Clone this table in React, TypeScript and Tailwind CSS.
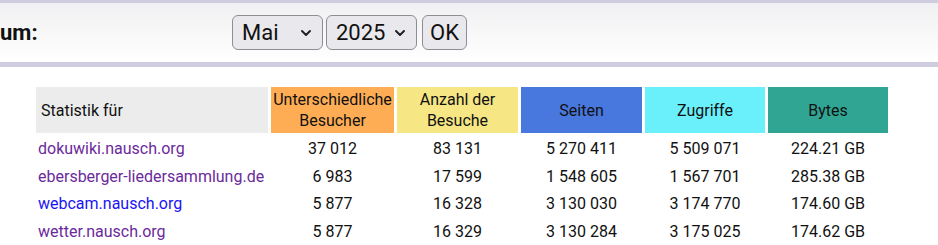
import { ReactNode } from "react";

const rows = [
  { site: "dokuwiki.nausch.org", visited: true, v: ["37 012", "83 131", "5 270 411", "5 509 071", "224.21 GB"] },
  { site: "ebersberger-liedersammlung.de", visited: true, v: ["6 983", "17 599", "1 548 605", "1 567 701", "285.38 GB"] },
  { site: "webcam.nausch.org", visited: false, v: ["5 877", "16 328", "3 130 030", "3 174 770", "174.60 GB"] },
  { site: "wetter.nausch.org", visited: true, v: ["5 877", "16 329", "3 130 284", "3 175 025", "174.62 GB"] },
];

const Chevron = () => (
  <svg width="12" height="8" viewBox="0 0 12 8" fill="none" stroke="#222" strokeWidth="2" strokeLinecap="round" strokeLinejoin="round">
    <path d="M2 2l4 4 4-4" />
  </svg>
);

const FakeSelect = ({ w, children }: { w: string; children: ReactNode }) => (
  <div className={`${w} h-[35px] flex items-center justify-between pl-[9px] pr-[10px] rounded-[6px] border border-[#8d8d93] bg-[#e9e9ed] text-[22px] text-[#111]`}>
    <span>{children}</span>
    <Chevron />
  </div>
);

const App = () => {
  return (
    <div className="w-[938px] h-[245px] overflow-hidden bg-white font-['Roboto',sans-serif] text-[#111]">
      <div className="h-[67px] border-t-[3px] border-b-[5px] border-[#cdcddf] bg-gradient-to-b from-[#f0f0f2] to-white flex items-center">
        <div className="w-[232px] text-[22px] font-bold text-[#111] -mt-[1px]">um:</div>
        <div className="flex items-center gap-[3px]">
          <FakeSelect w="w-[91px]">Mai</FakeSelect>
          <FakeSelect w="w-[91px]">2025</FakeSelect>
          <div className="ml-[2px] w-[45px] h-[35px] flex items-center justify-center rounded-[6px] border border-[#8d8d93] bg-[#e9e9ed] text-[22px]">
            OK
          </div>
        </div>
      </div>

      <table className="ml-[33px] mt-[17px] border-separate border-spacing-[3px] text-[16px]">
        <thead>
          <tr className="h-[46px] leading-[21px] font-normal">
            <th className="w-[232px] bg-[#ececec] text-left pl-[5px] font-normal">Statistik für</th>
            <th className="w-[123px] bg-[#ffad55] font-normal">Unterschiedliche<br />Besucher</th>
            <th className="w-[121px] bg-[#f6e784] font-normal">Anzahl der<br />Besuche</th>
            <th className="w-[121px] bg-[#4877de] font-normal">Seiten</th>
            <th className="w-[120px] bg-[#6af0fb] font-normal">Zugriffe</th>
            <th className="w-[120px] bg-[#30a593] font-normal">Bytes</th>
          </tr>
        </thead>
        <tbody>
          {rows.map((r) => (
            <tr key={r.site} className="h-[24.5px] leading-[20px]">
              <td className={`pl-[2px] pt-[2px] ${r.visited ? "text-[#6b2a9c]" : "text-[#1a14f5]"}`}>{r.site}</td>
              {r.v.map((x, i) => (
                <td key={i} className="text-center pt-[2px]">{x}</td>
              ))}
            </tr>
          ))}
        </tbody>
      </table>
    </div>
  );
};

export default App;
